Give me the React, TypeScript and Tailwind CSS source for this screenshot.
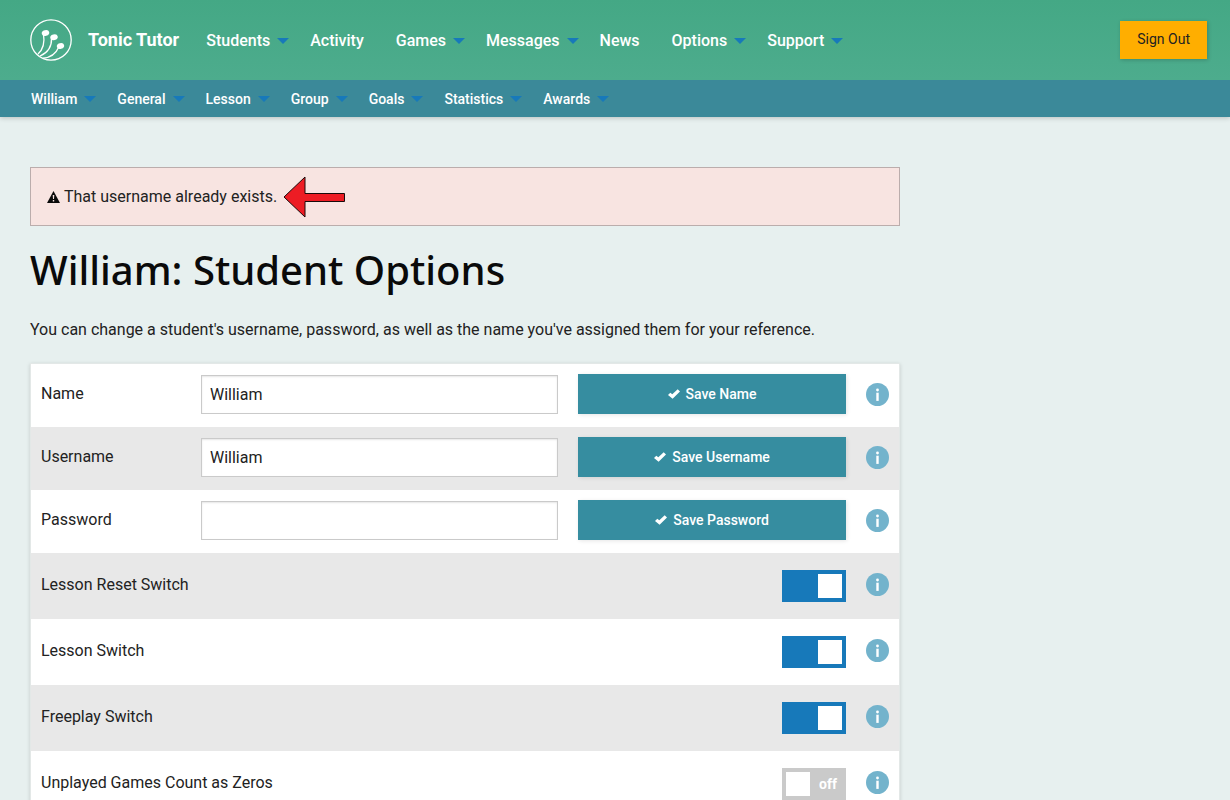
import { useState } from 'react';

type NavItem = { label: string; menu?: boolean };

const mainNav: NavItem[] = [
  { label: 'Students', menu: true },
  { label: 'Activity' },
  { label: 'Games', menu: true },
  { label: 'Messages', menu: true },
  { label: 'News' },
  { label: 'Options', menu: true },
  { label: 'Support', menu: true },
];

const studentNav = ['William', 'General', 'Lesson', 'Group', 'Goals', 'Statistics', 'Awards'];

const fields = [
  { id: 'name', label: 'Name', type: 'text', value: 'William' },
  { id: 'username', label: 'Username', type: 'text', value: 'William' },
  { id: 'password', label: 'Password', type: 'password', value: '' },
];

const switches = [
  { id: 'lesson-reset', label: 'Lesson Reset Switch', on: true },
  { id: 'lesson', label: 'Lesson Switch', on: true },
  { id: 'freeplay', label: 'Freeplay Switch', on: true },
  { id: 'unplayed', label: 'Unplayed Games Count as Zeros', on: false },
];

function Caret() {
  return (
    <svg className="h-1.5 w-3 fill-[#1779ba]" viewBox="0 0 12 6" aria-hidden="true">
      <path d="M0 0h12L6 6z" />
    </svg>
  );
}

function Logo() {
  return (
    <svg className="h-[42px] w-[42px]" viewBox="0 0 42 42" fill="none" stroke="#fff" aria-hidden="true">
      <circle cx="21" cy="21" r="20.2" strokeWidth="1.3" />
      <g strokeWidth="1.3">
        <path d="M13.5 15c1.3 8 .6 14.5-5.5 20" />
        <path d="M21.5 19.5c.3 7.500-3.500 14-11.500 17.500" />
        <path d="M28.5 28.5c-2.500 6-8 10-15.500 10.700" />
      </g>
      <g fill="#fff" stroke="none">
        <ellipse cx="15.5" cy="14" rx="3.8" ry="2.9" transform="rotate(-15 15.5 14)" />
        <ellipse cx="24" cy="18.3" rx="3.8" ry="2.9" transform="rotate(-15 24 18.3)" />
        <ellipse cx="30.5" cy="27" rx="3.7" ry="2.9" transform="rotate(-15 30.5 27)" />
      </g>
    </svg>
  );
}

function InfoButton({ label }: { label: string }) {
  return (
    <button type="button" aria-label={`About ${label}`} className="block h-[23px] w-[23px] shrink-0">
      <svg viewBox="0 0 23 23" aria-hidden="true">
        <circle cx="11.5" cy="11.5" r="11.5" fill="#73b3cc" />
        <circle cx="11.5" cy="7" r="1.4" fill="#fff" />
        <path d="M10.3 9.7h2.4v8.2h-2.4z" fill="#fff" />
      </svg>
    </button>
  );
}

function Toggle({ id, defaultOn }: { id: string; defaultOn: boolean }) {
  const [on, setOn] = useState(defaultOn);
  return (
    <label
      htmlFor={id}
      className={`flex h-8 w-16 cursor-pointer items-center justify-between p-1 ${on ? 'bg-[#1779ba]' : 'bg-[#cacaca]'}`}
    >
      <input id={id} type="checkbox" className="sr-only" checked={on} onChange={() => setOn(!on)} />
      {on && <span />}
      <span className="h-6 w-6 bg-white" />
      {!on && <span className="pr-[5px] text-sm font-bold text-white">off</span>}
    </label>
  );
}

export default function App() {
  return (
    <div className="min-h-screen bg-[#e7f0ef] font-[Roboto,sans-serif] text-base text-[#222]">
      <header className="shadow-[0_1px_5px_rgba(0,0,0,0.2)]">
        {/* Main bar */}
        <div className="flex h-20 items-center bg-linear-to-b from-[#44a885] to-[#4dac8d] pr-[23px] pl-[30px] text-white">
          <a href="#" className="flex items-center gap-4">
            <Logo />
            <span className="text-lg font-bold">Tonic Tutor</span>
          </a>
          <nav className="ml-[11px] flex flex-1 pt-0.5">
            {mainNav.map((item) => (
              <a
                key={item.label}
                href="#"
                className={`flex items-center gap-[7px] pl-4 font-medium ${item.menu ? 'pr-[5px]' : 'pr-4'}`}
              >
                {item.label}
                {item.menu && <Caret />}
              </a>
            ))}
          </nav>
          <button
            type="button"
            className="h-[38px] bg-[#ffae00] px-[17px] pb-0.5 text-sm text-[#222] shadow-[1px_1px_4px_rgba(0,0,0,0.2)]"
          >
            Sign Out
          </button>
        </div>

        {/* Student bar */}
        <nav className="flex h-[37px] items-center bg-[#3b8999] pl-[15px] text-white">
          {studentNav.map((label) => (
            <a key={label} href="#" className="flex items-center gap-[7px] pr-[5px] pl-4 text-sm font-medium">
              {label}
              <Caret />
            </a>
          ))}
        </nav>
      </header>

      <main className="max-w-[900px] pt-[50px] pl-[30px]">
        <div role="alert" className="flex items-center border border-[#bbadac] bg-[#f8e4e1] px-4 pt-2 pb-[7px]">
          <svg className="mr-1 h-3 w-[13px]" viewBox="0 0 13 12" aria-hidden="true">
            <path d="M6.5 0 13 12H0z" fill="#0a0a0a" />
            <path d="M5.7 4h1.6l-.3 4H6zM5.8 9h1.4v1.4H5.8z" fill="#f8e4e1" />
          </svg>
          <span>That username already exists.</span>
          <svg className="ml-1.5 h-[42px] w-[62px]" viewBox="0 0 62 42" aria-hidden="true">
            <path d="M1 21 22 1v16.500h39.500v8H22V41z" fill="#ed1c24" stroke="#1a0a0a" />
          </svg>
        </div>

        <h1 className="mt-4 font-['Noto_Sans',sans-serif] text-[40px] leading-[56px] font-medium text-[#0a0a0a]">
          William: Student Options
        </h1>
        <p className="mt-5 leading-6">
          You can change a student's username, password, as well as the name you've assigned them for your reference.
        </p>

        <section className="mt-[21px] border border-[#e3e8e7] bg-white shadow-[0_1px_4px_rgba(0,0,0,0.15)]">
          {fields.map((field) => (
            <form
              key={field.id}
              onSubmit={(e) => e.preventDefault()}
              className="grid grid-cols-[140px_4fr_3fr_23px] items-center gap-x-5 px-2.5 pt-2.5 pb-[13px] even:bg-[#e8e8e8]"
            >
              <label htmlFor={field.id}>{field.label}</label>
              <input
                id={field.id}
                type={field.type}
                defaultValue={field.value}
                className="h-[39px] w-full border border-[#cacaca] bg-white px-2 shadow-[inset_0_1px_2px_rgba(10,10,10,0.1)]"
              />
              <button
                type="submit"
                className="flex h-10 items-center justify-center gap-1.5 bg-[#368da0] text-sm font-medium text-white shadow-[1px_1px_4px_rgba(0,0,0,0.1)]"
              >
                <svg className="h-2.5 w-3 fill-white" viewBox="0 0 12 10" aria-hidden="true">
                  <path d="M0 6 2.3 3.7 4.3 5.2 9.7.2 12 2.4 4.6 9.8z" />
                </svg>
                Save {field.label}
              </button>
              <InfoButton label={field.label} />
            </form>
          ))}

          {switches.map((item) => (
            <div key={item.id} className="flex items-center gap-5 px-2.5 py-[17px] even:bg-[#e8e8e8]">
              <label htmlFor={item.id} className="flex-1 pb-0.5">
                {item.label}
              </label>
              <Toggle id={item.id} defaultOn={item.on} />
              <div className="pb-1">
                <InfoButton label={item.label} />
              </div>
            </div>
          ))}
        </section>
      </main>
    </div>
  );
}
